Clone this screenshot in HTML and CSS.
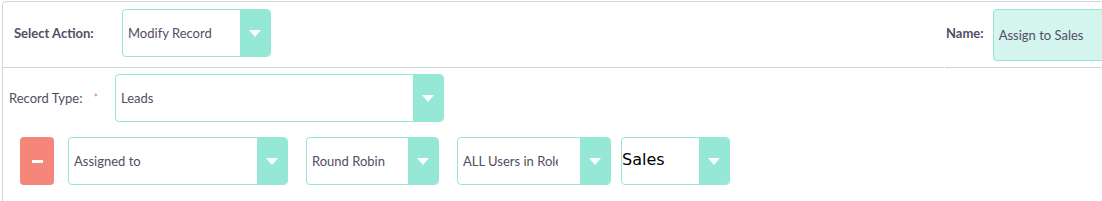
FILE: index.html
```html
<!DOCTYPE html>
<html>
<head>
<meta charset="utf-8">
<link rel="stylesheet" href="styles.css">
</head>
<body>
<div class="panel">
  <div class="row row-top">
    <div class="cell cell-action">
      <span class="label label-bold label-action">Select Action:</span>
      <div class="select w-action">
        <span class="select-text">Modify Record</span>
        <span class="select-arrow"><span class="tri"></span></span>
      </div>
    </div>
    <div class="cell cell-name">
      <span class="label label-bold">Name:</span>
      <div class="input-name">Assign to Sales</div>
    </div>
  </div>
  <div class="row row-type">
    <span class="label label-type">Record Type:<span class="req">*</span></span>
    <div class="select w-type">
      <span class="select-text">Leads</span>
      <span class="select-arrow"><span class="tri"></span></span>
    </div>
  </div>
  <div class="row row-field">
    <button class="btn-remove" type="button"><span class="minus"></span></button>
    <div class="select w-field">
      <span class="select-text">Assigned to</span>
      <span class="select-arrow"><span class="tri"></span></span>
    </div>
    <div class="select w-method">
      <span class="select-text">Round Robin</span>
      <span class="select-arrow"><span class="tri"></span></span>
    </div>
    <div class="select w-users">
      <span class="select-text clip">ALL Users in Role</span>
      <span class="select-arrow"><span class="tri"></span></span>
    </div>
    <div class="select w-role">
      <span class="select-text native">Sales</span>
      <span class="select-arrow"><span class="tri"></span></span>
    </div>
  </div>
</div>
</body>
</html>
```

FILE: styles.css
```css
html, body {
  margin: 0;
  padding: 0;
  overflow: hidden;
  background: #ffffff;
}
body {
  font-family: Lato, "Noto Sans", sans-serif;
  font-size: 13px;
  color: #534d64;
}
.panel {
  margin: 1px 0 0 2px;
  width: 1180px;
  height: 260px;
  border: 1px solid #cfd4d8;
  border-radius: 4px;
  box-sizing: border-box;
}
.row {
  display: flex;
}
.row-top {
  height: 66px;
  box-sizing: border-box;
  align-items: flex-start;
}
.cell {
  display: flex;
  align-items: flex-start;
  height: 66px;
  box-sizing: border-box;
  border-bottom: 1px solid #cfd4d8;
  padding-top: 7px;
}
.cell-action {
  flex: 0 0 941px;
  padding-left: 11px;
}
.cell-name {
  flex: 1 1 auto;
  min-width: 0;
  margin-left: 1px;
  padding-left: 1px;
}
.label {
  display: flex;
  align-items: center;
  height: 48px;
  white-space: nowrap;
}
.label-bold {
  font-weight: 700;
}
.label-action {
  width: 108px;
}
.cell-name .label {
  margin-right: 9px;
}
.select {
  display: flex;
  height: 48px;
  box-sizing: border-box;
  border: 1px solid #96e8d6;
  border-radius: 4px;
  background: #ffffff;
  overflow: hidden;
}
.select-text {
  flex: 1;
  display: flex;
  align-items: center;
  padding-left: 5px;
  white-space: nowrap;
  overflow: hidden;
}
.select-text.clip {
  flex: 0 0 95px;
  margin-right: auto;
}
.select-text.native {
  font-family: "DejaVu Sans", sans-serif;
  font-size: 16px;
  color: #000000;
  padding-left: 0;
  padding-bottom: 4px;
}
.select-arrow {
  flex: 0 0 30px;
  display: flex;
  align-items: center;
  justify-content: center;
  background: #96e8d6;
}
.tri {
  width: 0;
  height: 0;
  border-left: 6px solid transparent;
  border-right: 6px solid transparent;
  border-top: 7px solid #ffffff;
}
.w-action { width: 149px; }
.input-name {
  width: 140px;
  flex-shrink: 0;
  height: 52px;
  box-sizing: border-box;
  border: 1px solid #96e8d6;
  border-right: none;
  border-radius: 4px 0 0 4px;
  background: #d3f5ee;
  display: flex;
  align-items: center;
  padding-left: 5px;
  white-space: nowrap;
}
.row-type {
  padding: 6px 0 0 6px;
  align-items: flex-start;
}
.label-type {
  width: 106px;
  align-items: center;
}
.req {
  color: #f08377;
  font-size: 11px;
  margin-left: 11px;
  align-self: center;
  position: relative;
  top: -1px;
}
.w-type { width: 329px; }
.row-field {
  padding: 15px 0 0 17px;
  align-items: flex-start;
}
.btn-remove {
  width: 34px;
  height: 48px;
  border: none;
  border-radius: 4px;
  background: #f7867a;
  padding: 0;
  display: flex;
  align-items: center;
  justify-content: center;
  margin-right: 14px;
}
.minus {
  width: 11px;
  height: 3px;
  background: #ffffff;
}
.w-field { width: 220px; margin-right: 18px; }
.w-method { width: 133px; margin-right: 18px; }
.w-users { width: 154px; margin-right: 10px; }
.w-role { width: 109px; }
```
